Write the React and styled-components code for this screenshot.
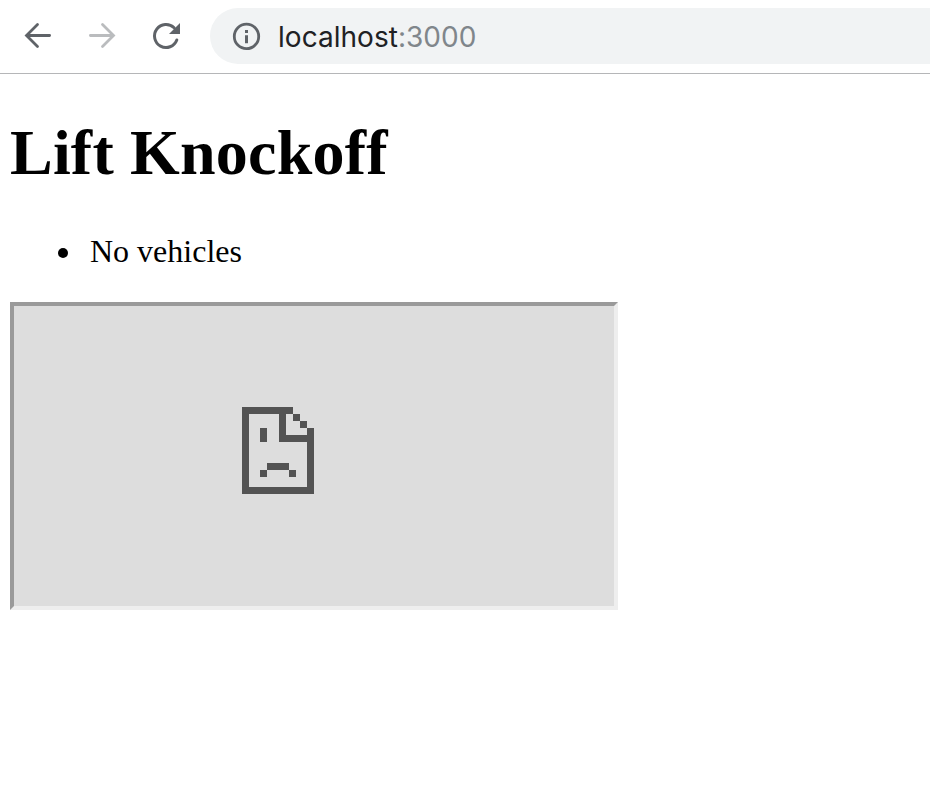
import React from 'react';
import styled, { createGlobalStyle } from 'styled-components';

const GlobalStyle = createGlobalStyle`
  * { box-sizing: border-box; }
  body { margin: 0; background: #fff; overflow: hidden; }
`;

const Browser = styled.div`
  height: 798px;
  overflow: hidden;
  background: #fff;
`;

const Toolbar = styled.header`
  display: flex;
  height: 74px;
  padding: 8px 0 0 18px;
  border-bottom: 1px solid #b5b6b8;
`;

const NavButton = styled.button`
  width: 40px;
  height: 56px;
  margin-right: 24px;
  padding: 0;
  border: 0;
  background: none;
  color: ${({ $muted }) => ($muted ? '#babcbe' : '#5f6368')};

  svg { display: block; }
`;

const AddressBar = styled.div`
  flex: 1;
  display: flex;
  align-items: center;
  height: 56px;
  padding-left: 22px;
  border-radius: 28px 0 0 28px;
  background: #f1f3f4;
  color: #5f6368;
`;

const Url = styled.span`
  margin-left: 17px;
  padding-top: 1px;
  font: 28px/40px Inter, sans-serif;
  letter-spacing: 0.03px;
  color: #202124;
`;

const Port = styled.span`
  color: #80868b;
`;

const Page = styled.main`
  padding: 42px 10px 0;
  font-family: 'Liberation Serif', serif;
  color: #000;
`;

const Title = styled.h1`
  margin: 0;
  font-size: 64px;
  line-height: 74px;
  font-weight: 700;
  letter-spacing: 0.2px;
`;

const VehicleList = styled.ul`
  margin: 43px 0 0;
  padding-left: 48px;
  font-size: 32px;
  line-height: 36px;
  list-style: none;
`;

const Vehicle = styled.li`
  display: flex;
  align-items: center;

  &::before {
    content: '';
    width: 10px;
    height: 10px;
    margin: 4px 22px 0 0;
    border-radius: 50%;
    background: #000;
  }
`;

const Frame = styled.section`
  display: flex;
  width: 608px;
  height: 308px;
  margin-top: 33px;
  padding: 101px 0 0 228px;
  border: 4px solid;
  border-color: #9a9a9a #eee #eee #9a9a9a;
  background: #ddd;
`;

function Arrow({ flipped }) {
  return (
    <svg width="40" height="56" viewBox="0 0 40 56" fill="none" stroke="currentColor" strokeWidth="2.8" strokeLinecap="round">
      <g transform={flipped ? 'translate(40 0) scale(-1 1)' : undefined}>
        <path d="M31.6 27.5H9M19.5 16.5L8.5 27.5L19.5 38.5" />
      </g>
    </svg>
  );
}

function Reload() {
  return (
    <svg width="40" height="56" viewBox="0 0 40 56" fill="none">
      <path d="M30.8 32A11.5 11.5 0 1 1 28.1 19.8" stroke="currentColor" strokeWidth="3" strokeLinecap="round" />
      <path d="M34 15V26H23Z" fill="currentColor" />
    </svg>
  );
}

function Info() {
  return (
    <svg width="29" height="29" viewBox="0 0 29 29" fill="none">
      <circle cx="14.5" cy="14.4" r="12.2" stroke="currentColor" strokeWidth="2.8" />
      <path d="M13 8H16V11H13ZM13 13.3H16V21.2H13Z" fill="currentColor" />
    </svg>
  );
}

function SadPage() {
  return (
    <svg width="72" height="87" viewBox="0 0 72 87" fill="#535353" shapeRendering="crispEdges">
      <path d="M0 0H51V7H44V28H65V21H72V87H0ZM7 7V80H65V35H37V7Z" fillRule="evenodd" />
      <path d="M51 7H58V14H51ZM58 14H65V21H58ZM18 21H25V35H18ZM25 56H47V63H25ZM18 63H25V70H18ZM47 63H54V70H47Z" />
    </svg>
  );
}

export default function App() {
  return (
    <>
      <GlobalStyle />
      <Browser>
        <Toolbar>
          <NavButton aria-label="Back"><Arrow /></NavButton>
          <NavButton aria-label="Forward" $muted><Arrow flipped /></NavButton>
          <NavButton aria-label="Reload"><Reload /></NavButton>
          <AddressBar>
            <Info />
            <Url>localhost<Port>:3000</Port></Url>
          </AddressBar>
        </Toolbar>
        <Page>
          <Title>Lift Knockoff</Title>
          <VehicleList><Vehicle>No vehicles</Vehicle></VehicleList>
          <Frame aria-label="Unavailable content"><SadPage /></Frame>
        </Page>
      </Browser>
    </>
  );
}
